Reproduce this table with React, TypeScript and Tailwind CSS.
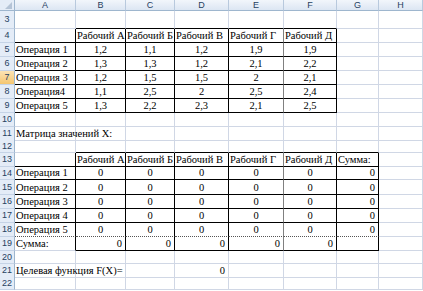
import React from 'react';

type Cell = { t: string; a?: 'l' | 'c' | 'r' };

const colLetters = ['A', 'B', 'C', 'D', 'E', 'F', 'G', 'H'];

// row number -> height class (literal strings only)
const rowHeights: [number, string][] = [
  [3, 'h-[18px]'],
  [4, 'h-[14px]'],
  [5, 'h-[14px]'],
  [6, 'h-[14px]'],
  [7, 'h-[14px]'],
  [8, 'h-[14px]'],
  [9, 'h-[14px]'],
  [10, 'h-[14px]'],
  [11, 'h-[13px]'],
  [12, 'h-[13px]'],
  [13, 'h-[14px]'],
  [14, 'h-[13px]'],
  [15, 'h-[15px]'],
  [16, 'h-[14px]'],
  [17, 'h-[14px]'],
  [18, 'h-[14px]'],
  [19, 'h-[14px]'],
  [20, 'h-[13px]'],
  [21, 'h-[13px]'],
  [22, 'h-[13px]'],
];

const workers = ['Рабочий А', 'Рабочий Б', 'Рабочий В', 'Рабочий Г', 'Рабочий Д'];
const times = [
  ['1,2', '1,1', '1,2', '1,9', '1,9'],
  ['1,3', '1,3', '1,2', '2,1', '2,2'],
  ['1,2', '1,5', '1,5', '2', '2,1'],
  ['1,1', '2,5', '2', '2,5', '2,4'],
  ['1,3', '2,2', '2,3', '2,1', '2,5'],
];
const ops = ['Операция 1', 'Операция 2', 'Операция 3', 'Операция4', 'Операция 5'];
const ops2 = ['Операция 1', 'Операция 2', 'Операция 3', 'Операция 4', 'Операция 5'];

const data: Record<string, Cell> = {};
workers.forEach((w, i) => {
  data[`4-${i + 2}`] = { t: w };
  data[`13-${i + 2}`] = { t: w };
});
data['13-7'] = { t: 'Сумма:' };
times.forEach((row, r) => {
  data[`${r + 5}-1`] = { t: ops[r] };
  row.forEach((v, c) => (data[`${r + 5}-${c + 2}`] = { t: v, a: 'c' }));
});
ops2.forEach((o, r) => {
  data[`${r + 14}-1`] = { t: o };
  for (let c = 2; c <= 6; c++) data[`${r + 14}-${c}`] = { t: '0', a: 'c' };
  data[`${r + 14}-7`] = { t: '0', a: 'r' };
});
data['11-1'] = { t: 'Матрица значений X:' };
data['19-1'] = { t: 'Сумма:' };
for (let c = 2; c <= 6; c++) data[`19-${c}`] = { t: '0', a: 'r' };
data['21-1'] = { t: 'Целевая функция F(X)=' };
data['21-4'] = { t: '0', a: 'r' };

const bordered = (r: number, c: number) =>
  (r >= 4 && r <= 9 && c >= 2 && c <= 6) ||
  (r >= 5 && r <= 9 && c === 1) ||
  (r >= 13 && r <= 19 && c >= 2 && c <= 7) ||
  (r >= 14 && r <= 18 && c === 1);

const cellClass = (r: number, c: number) => {
  const right = bordered(r, c) || bordered(r, c + 1);
  const bottom = bordered(r, c) || bordered(r + 1, c);
  let rc = right ? 'border-r-black' : 'border-r-[#d0d7e5]';
  if (right && c === 5) rc = 'border-r-[#808080]';
  let bc = bottom ? 'border-b-black' : 'border-b-[#d0d7e5]';
  if (r === 18 && c >= 1 && c <= 7) bc = 'border-b-[#555] [border-bottom-style:dotted]';
  return `${rc} ${bc}`;
};

const grid = 'grid grid-cols-[15px_61px_50px_49px_54px_55px_53px_42px_1fr]';

export default function App() {
  return (
    <div className="w-[423px] h-[291px] overflow-hidden bg-white font-['Liberation_Serif',serif] text-[10.5px] text-black">
      {/* column headers */}
      <div className={`${grid} h-[11px]`}>
        <div className="relative border-r border-b border-[#9eb6ce] bg-[#e4ecf7]">
          <div className="absolute right-[2px] bottom-[1px] w-0 h-0 border-l-[7px] border-l-transparent border-b-[7px] border-b-[#b4c3d6]" />
        </div>
        {colLetters.map((l) => (
          <div
            key={l}
            className="flex items-center justify-center border-r border-b border-r-[#b8c9dd] border-b-[#9eb6ce] bg-gradient-to-b from-[#f2f6fb] to-[#dce6f3] font-['Liberation_Sans',sans-serif] text-[9px] leading-none text-[#27415f]"
          >
            {l}
          </div>
        ))}
      </div>

      {rowHeights.map(([r, h]) => (
        <div key={r} className={`${grid} ${h}`}>
          <div
            className={`flex items-center justify-center border-r border-b border-r-[#9eb6ce] border-b-[#c5d3e6] font-['Liberation_Sans',sans-serif] text-[9px] leading-none text-[#27415f] ${
              r === 7 ? 'bg-gradient-to-b from-[#fbe3b4] to-[#f5c66f]' : 'bg-[#e4ecf7]'
            }`}
          >
            {r}
          </div>
          {colLetters.map((_, i) => {
            const c = i + 1;
            const cell = data[`${r}-${c}`];
            const align =
              cell?.a === 'c' ? 'justify-center' : cell?.a === 'r' ? 'justify-end pr-[3px]' : 'justify-start pl-[1px]';
            const overflowing = c === 1 && (r === 11 || r === 21 || r === 19);
            return (
              <div
                key={c}
                className={`flex items-end border-r border-b ${cellClass(r, c)} ${align} whitespace-nowrap leading-[13px] ${
                  overflowing ? 'overflow-visible relative z-10' : 'overflow-hidden'
                }`}
              >
                {cell?.t}
              </div>
            );
          })}
        </div>
      ))}
    </div>
  );
}
